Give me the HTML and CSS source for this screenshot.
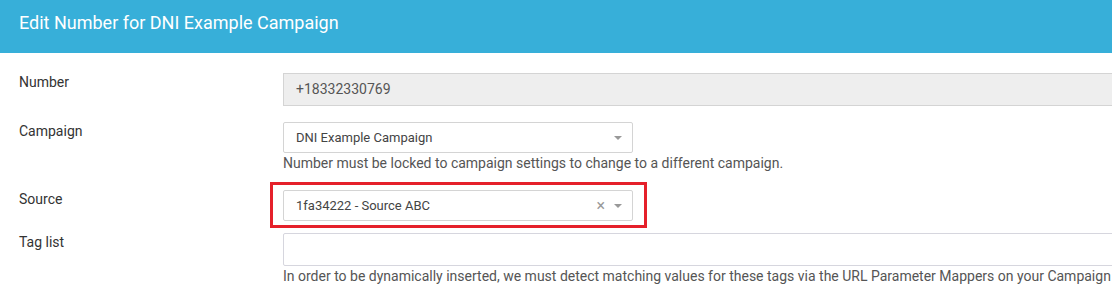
FILE: index.html
```html
<!DOCTYPE html>
<html lang="en">
<head>
    <meta charset="UTF-8">
    <title>Edit Number</title>
    <link rel="stylesheet" href="styles.css">
</head>
<body>
    <div class="modal">
        <div class="modal-header">
            <h2>Edit Number for DNI Example Campaign</h2>
        </div>

        <div class="modal-body">
            <div class="form-row row-number">
                <label>Number</label>
                <div class="field">
                    <div class="input readonly">+18332330769</div>
                </div>
            </div>

            <div class="form-row row-campaign">
                <label>Campaign</label>
                <div class="field">
                    <div class="select">
                        <span class="select-value">DNI Example Campaign</span>
                        <span class="select-arrow"></span>
                    </div>
                    <p class="help">Number must be locked to campaign settings to change to a different campaign.</p>
                </div>
            </div>

            <div class="form-row row-source">
                <label>Source</label>
                <div class="field">
                    <div class="select highlighted">
                        <span class="select-value">1fa34222 - Source ABC</span>
                        <span class="select-clear">&times;</span>
                        <span class="select-arrow"></span>
                    </div>
                </div>
            </div>

            <div class="form-row row-tags">
                <label>Tag list</label>
                <div class="field">
                    <div class="input tags"></div>
                    <p class="help">In order to be dynamically inserted, we must detect matching values for these tags via the URL Parameter Mappers on your Campaign</p>
                </div>
            </div>
        </div>
    </div>
</body>
</html>
```

FILE: styles.css
```css
html, body {
    margin: 0;
    padding: 0;
    overflow: hidden;
}
body {
    font-family: Roboto, 'Liberation Sans', sans-serif;
    color: #333;
    background-color: #fff;
}
.modal {
    width: 1200px;
}
.modal-header {
    background-color: #37afd9;
    height: 53px;
    padding: 0 19px;
    display: flex;
    align-items: center;
}
.modal-header h2 {
    margin: 0 0 8px 0;
    font-size: 18px;
    font-weight: 400;
    color: #fff;
}
.modal-body {
    padding: 20px 0 0 19px;
}
.form-row {
    display: grid;
    grid-template-columns: 264px 1fr;
    align-items: start;
}
.form-row label {
    font-size: 14px;
    line-height: 20px;
    color: #333;
    margin-top: -1px;
}
.row-number {
    margin-bottom: 16px;
}
.row-campaign {
    margin-bottom: 17px;
}
.row-source {
    margin-bottom: 12px;
}
.input {
    box-sizing: border-box;
    height: 33px;
    padding: 0 12px;
    font-size: 14px;
    line-height: 31px;
    color: #555;
    border: 1px solid #d6d6de;
    border-radius: 2px;
}
.input.readonly {
    background-color: #eee;
    border-color: #d4d4d4;
    border-radius: 0;
}
.select {
    position: relative;
    box-sizing: border-box;
    width: 350px;
    height: 31px;
    padding: 0 12px;
    display: flex;
    align-items: center;
    font-size: 13px;
    color: #444;
    border: 1px solid #d4d4d4;
    border-radius: 2px;
    background-color: #fff;
}
.select-value {
    flex-grow: 1;
}
.select-clear {
    font-size: 16px;
    color: #999;
    margin-right: 9px;
    line-height: 1;
}
.select-arrow {
    width: 0;
    height: 0;
    border-left: 4px solid transparent;
    border-right: 4px solid transparent;
    border-top: 4px solid #999;
    margin-right: -2px;
}
.highlighted::after {
    content: "";
    position: absolute;
    left: -14px;
    top: -9px;
    right: -15px;
    bottom: -8px;
    border: 3px solid #e5202a;
}
.help {
    margin: 0;
    font-size: 14px;
    line-height: 20px;
    color: #555;
    white-space: nowrap;
}
```
